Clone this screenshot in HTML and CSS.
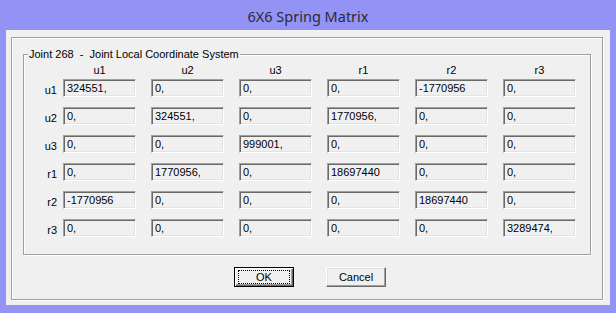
FILE: index.html
```html
<!DOCTYPE html>
<html lang="en">
<head>
    <meta charset="UTF-8">
    <title>6X6 Spring Matrix</title>
    <link rel="stylesheet" href="styles.css">
</head>
<body>
    <div class="window">
        <div class="titlebar">6X6 Spring Matrix</div>
        <div class="client">
            <div class="frame">
                <div class="group">
                    <div class="group-label">Joint 268&nbsp; -&nbsp; Joint Local Coordinate System</div>
                    <div class="matrix" id="matrix"></div>
                </div>
                <div class="buttons">
                    <button class="btn default"><span class="focus">OK</span></button>
                    <button class="btn">Cancel</button>
                </div>
            </div>
        </div>
    </div>

    <script>
        const names = ['u1', 'u2', 'u3', 'r1', 'r2', 'r3'];
        const values = [
            ['324551,', '0,', '0,', '0,', '-1770956', '0,'],
            ['0,', '324551,', '0,', '1770956,', '0,', '0,'],
            ['0,', '0,', '999001,', '0,', '0,', '0,'],
            ['0,', '1770956,', '0,', '18697440', '0,', '0,'],
            ['-1770956', '0,', '0,', '0,', '18697440', '0,'],
            ['0,', '0,', '0,', '0,', '0,', '3289474,']
        ];

        const matrix = document.getElementById('matrix');
        let html = '<div class="corner"></div>';
        names.forEach(n => html += `<div class="col-head">${n}</div>`);
        values.forEach((row, i) => {
            html += `<div class="row-head">${names[i]}</div>`;
            row.forEach(v => html += `<div class="cell"><div class="field">${v}</div></div>`);
        });
        matrix.innerHTML = html;
    </script>
</body>
</html>
```

FILE: styles.css
```css
body {
    margin: 0;
    background: #9393f6;
    font-family: "Liberation Sans", Arial, sans-serif;
    font-size: 11px;
    color: #000;
}
.window {
    width: 616px;
    height: 313px;
}
.titlebar {
    height: 30px;
    line-height: 32px;
    text-align: center;
    font-family: "Noto Sans", "Open Sans", sans-serif;
    font-size: 14.5px;
    color: #2a2a3a;
}
.client {
    margin: 0 6px;
    height: 275px;
    background: #f0f0f0;
    overflow: hidden;
}
.frame {
    margin: 7px 7px 5px 5px;
    height: 261px;
    border: 1px solid #a0a0a0;
    box-shadow: inset 1px 1px 0 #fff, 1px 1px 0 #fff;
}
.group {
    position: relative;
    margin: 16px 11px 0 11px;
    padding: 6px 0 7px 0;
    border: 1px solid #a0a0a0;
    box-shadow: inset 1px 1px 0 #fff, 1px 1px 0 #fff;
}
.group-label {
    position: absolute;
    top: -7px;
    left: 4px;
    padding: 0 1px;
    line-height: 13px;
    background: #f0f0f0;
}
.matrix {
    display: grid;
    grid-template-columns: 39px repeat(5, 88px) 73px;
    grid-template-rows: 18px repeat(6, 28px);
    align-items: start;
}
.matrix .corner {
    height: 18px;
}
.col-head {
    width: 73px;
    text-align: center;
    line-height: 18px;
}
.row-head {
    text-align: right;
    padding-right: 6px;
    line-height: 18px;
    padding-top: 2px;
}
.field {
    width: 73px;
    height: 18px;
    box-sizing: border-box;
    padding: 1px 0 0 3px;
    line-height: 14px;
    background: #f0f0f0;
    border-top: 1px solid #a0a0a0;
    border-left: 1px solid #a0a0a0;
    border-right: 1px solid #fff;
    border-bottom: 1px solid #fff;
    box-shadow: inset 1px 1px 0 #696969, inset -1px -1px 0 #e3e3e3;
    white-space: nowrap;
}
.buttons {
    display: flex;
    gap: 32px;
    padding-left: 222px;
    margin-top: 12px;
}
.btn {
    width: 60px;
    height: 20px;
    padding: 0;
    background: #f0f0f0;
    font-family: "Liberation Sans", Arial, sans-serif;
    font-size: 11px;
    color: #000;
    border-top: 1px solid #fff;
    border-left: 1px solid #fff;
    border-right: 1px solid #696969;
    border-bottom: 1px solid #696969;
    box-shadow: inset -1px -1px 0 #a0a0a0, inset 1px 1px 0 #e3e3e3;
    border-radius: 0;
}
.btn.default {
    border: 1px solid #000;
    box-shadow: inset 1px 1px 0 #fff, inset -1px -1px 0 #696969, inset -2px -2px 0 #a0a0a0;
}
.focus {
    display: block;
    margin: 0 3px;
    height: 12px;
    line-height: 12px;
    border: 1px dotted #000;
}
```
